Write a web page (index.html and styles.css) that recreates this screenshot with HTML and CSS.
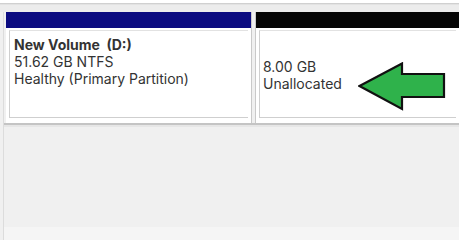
FILE: index.html
```html
<!DOCTYPE html>
<html>
<head>
<meta charset="utf-8">
<link rel="stylesheet" href="styles.css">
</head>
<body>
<div class="panel">
  <div class="top"></div>
  <div class="parts">
    <div class="part part-primary">
      <div class="bar bar-blue"></div>
      <div class="cell">
        <div class="inner">
          <div class="name">New Volume&nbsp; (D:)</div>
          <div class="line">51.62 GB NTFS</div>
          <div class="line">Healthy (Primary Partition)</div>
        </div>
      </div>
    </div>
    <div class="part part-free">
      <div class="bar bar-black"></div>
      <div class="cell">
        <div class="inner inner-free">
          <div class="free-text">
            <div class="line">8.00 GB</div>
            <div class="line">Unallocated</div>
          </div>
          <svg class="arrow" width="88" height="50" viewBox="0 0 88 50">
            <path d="M1.5 24 L44 1.5 L44 12 L86 12 L86 35 L44 35 L44 47 Z" fill="#2fb24b" stroke="#111" stroke-width="2.2" stroke-linejoin="miter"/>
          </svg>
        </div>
      </div>
    </div>
  </div>
  <div class="rest"></div>
</div>
</body>
</html>
```
FILE: styles.css
```css
html, body {
  margin: 0;
  padding: 0;
  width: 459px;
  height: 240px;
  overflow: hidden;
  background: #f0f0f0;
}
.panel {
  height: 240px;
  display: flex;
  flex-direction: column;
  border-left: 1px solid #dcdcdc;
  margin-left: 3px;
  font-family: Inter, "Liberation Sans", sans-serif;
  color: #333;
}
.top {
  height: 12px;
  margin-left: -4px;
  background: linear-gradient(#ffffff 0, #ffffff 3px, #c8c8c8 3px, #d8d8d8 4px, #ececec 5px, #ececec 12px);
}
.parts {
  display: flex;
  gap: 3px;
  padding-left: 2px;
  height: 111px;
  border-bottom: 2px solid #c4c4c4;
}
.part {
  display: flex;
  flex-direction: column;
}
.part-primary {
  width: 245px;
  border-right: 1px solid #c9c9c9;
}
.part-free {
  flex: 1;
  border-left: 1px solid #c9c9c9;
}
.bar {
  height: 16px;
}
.bar-blue {
  background: #0b0b80;
}
.bar-black {
  background: #050505;
}
.cell {
  flex: 1;
  background: #fff;
  padding: 2px 3px 5px 3px;
  display: flex;
}
.inner {
  flex: 1;
  border-left: 1px solid #cfcfcf;
  border-top: 1px solid #e2e2e2;
  border-bottom: 1px solid #cfcfcf;
  padding: 5px 0 0 4px;
  font-size: 14px;
  line-height: 17px;
}
.name {
  font-weight: 700;
}
.inner-free {
  display: flex;
  align-items: flex-start;
  padding-left: 3px;
  padding-top: 27px;
}
.free-text {
  width: 95px;
}
.arrow {
  display: block;
  margin-top: 4px;
}
.rest {
  flex: 1;
  border-top: 2px solid #e6e6e6;
  background: linear-gradient(#f0f0f0 0, #f0f0f0 100px, #f5f5f5 100px);
}
```
